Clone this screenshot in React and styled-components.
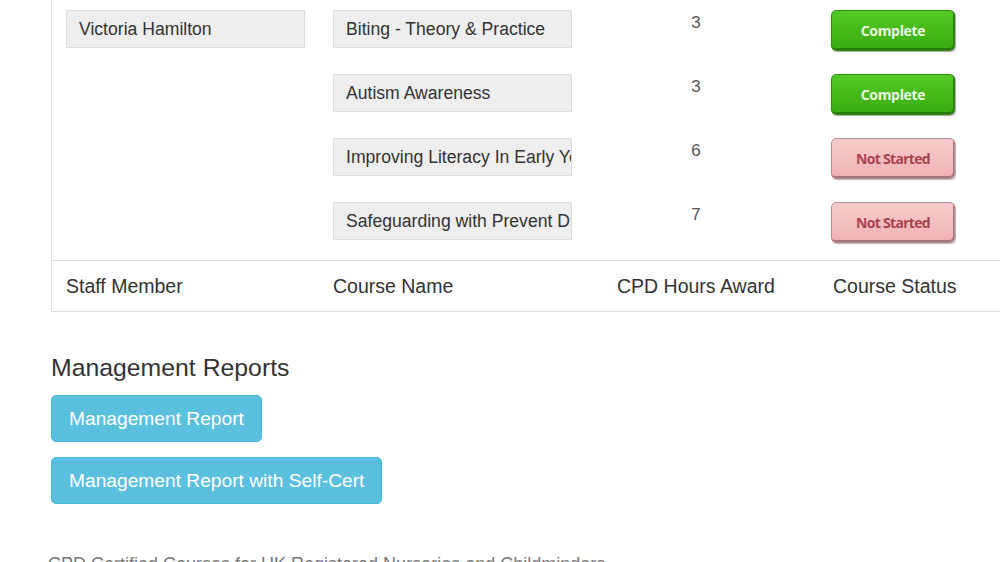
import styled, { createGlobalStyle } from 'styled-components';

const rows = [
  { staff: 'Victoria Hamilton', course: 'Biting - Theory & Practice', hours: 3, done: true },
  { staff: null, course: 'Autism Awareness', hours: 3, done: true },
  { staff: null, course: 'Improving Literacy In Early Years', hours: 6, done: false },
  { staff: null, course: 'Safeguarding with Prevent Duty', hours: 7, done: false },
];

const App = () => {
  return (
    <Page>
      <GlobalStyle />
      <Panel>
        {rows.map((row, i) => (
          <BodyRow key={i} last={i === rows.length - 1}>
            <Cell>{row.staff && <Field readOnly value={row.staff} />}</Cell>
            <Cell><Field readOnly value={row.course} /></Cell>
            <HoursCell>{row.hours}</HoursCell>
            <Cell><StatusButton done={row.done}>{row.done ? 'Complete' : 'Not Started'}</StatusButton></Cell>
          </BodyRow>
        ))}
        <FootRow>
          <HeadCell>Staff Member</HeadCell>
          <HeadCell>Course Name</HeadCell>
          <HeadCell>CPD Hours Award</HeadCell>
          <HeadCell>Course Status</HeadCell>
        </FootRow>
      </Panel>

      <Reports>
        <Heading>Management Reports</Heading>
        <InfoButton>Management Report</InfoButton>
        <InfoButton>Management Report with Self-Cert</InfoButton>
      </Reports>

      <Footer>CPD Certified Courses for UK Registered Nurseries and Childminders</Footer>
    </Page>
  );
};

export default App;

const GlobalStyle = createGlobalStyle`
  html, body {
    margin: 0;
    padding: 0;
    background: #ffffff;
    overflow: hidden;
  }
  body {
    font-family: "Liberation Sans", Arial, sans-serif;
    color: #333333;
  }
`;

const Page = styled.div`
  width: 1000px;
  height: 562px;
  overflow: hidden;
  padding-left: 51px;
  box-sizing: border-box;
`;

const Panel = styled.div`
  width: 980px;
  border: 1px solid #dddddd;
  border-top: none;
  box-sizing: border-box;
`;

const BodyRow = styled.div`
  display: grid;
  grid-template-columns: 267px 284px 216px 1fr;
  height: ${p => (p.last ? '68px' : '64px')};
`;

const Cell = styled.div`
  padding: 10px 0 0 14px;
  box-sizing: border-box;
`;

const HoursCell = styled.div`
  padding: 13px 0 0 0;
  width: 186px;
  text-align: center;
  font-size: 17px;
  color: #555555;
`;

const Field = styled.input`
  display: block;
  width: 239px;
  height: 38px;
  box-sizing: border-box;
  margin: 0;
  padding: 0 0 0 12px;
  background: #eeeeee;
  border: 1px solid #dedede;
  border-radius: 0;
  outline: none;
  font-family: "Liberation Sans", Arial, sans-serif;
  font-size: 17.6px;
  color: #333333;
`;

const StatusButton = styled.div`
  margin-left: -2px;
  width: 124px;
  height: 41px;
  box-sizing: border-box;
  border-radius: 5px;
  display: flex;
  align-items: center;
  justify-content: center;
  font-family: "Open Sans", sans-serif;
  font-weight: 700;
  font-size: 14px;
  letter-spacing: ${p => (p.done ? '-0.3px' : '-0.7px')};
  background: ${p => p.done
    ? 'linear-gradient(#55c927, #44b918 55%, #3bab12)'
    : 'linear-gradient(#f8cdcd, #f3bdbd 55%, #efb4b5)'};
  border: 1px solid ${p => (p.done ? '#2f8d0c' : '#b98a8a')};
  box-shadow: ${p => (p.done
    ? 'inset -1px -2px 0 #2a7a0e, 1px 1px 1px rgba(0,0,0,0.35)'
    : 'inset -1px -2px 0 #a87676, 1px 1px 1px rgba(0,0,0,0.3)')};
  color: ${p => (p.done ? '#eaf7e2' : '#a6434d')};
`;

const FootRow = styled.div`
  display: grid;
  grid-template-columns: 267px 284px 216px 1fr;
  height: 50px;
  align-items: center;
  border-top: 1px solid #dddddd;
`;

const HeadCell = styled.div`
  padding-left: 14px;
  font-size: 19.5px;
  color: #333333;
  white-space: nowrap;
`;

const Reports = styled.div`
  display: flex;
  flex-direction: column;
  align-items: flex-start;
  gap: 15px;
  padding-top: 40px;
`;

const Heading = styled.h3`
  margin: 0 0 -4px 0;
  font-size: 24.8px;
  font-weight: 400;
  line-height: 32px;
  color: #333333;
`;

const InfoButton = styled.button`
  height: 47px;
  padding: 0 17px;
  border: 1px solid #46b8da;
  border-radius: 5px;
  background: #5bc0de;
  color: #ffffff;
  font-family: "Liberation Sans", Arial, sans-serif;
  font-size: 19.2px;
  cursor: pointer;
`;

const Footer = styled.p`
  margin: 50px 0 0 -3px;
  font-size: 18px;
  color: #777777;
  white-space: nowrap;
`;
